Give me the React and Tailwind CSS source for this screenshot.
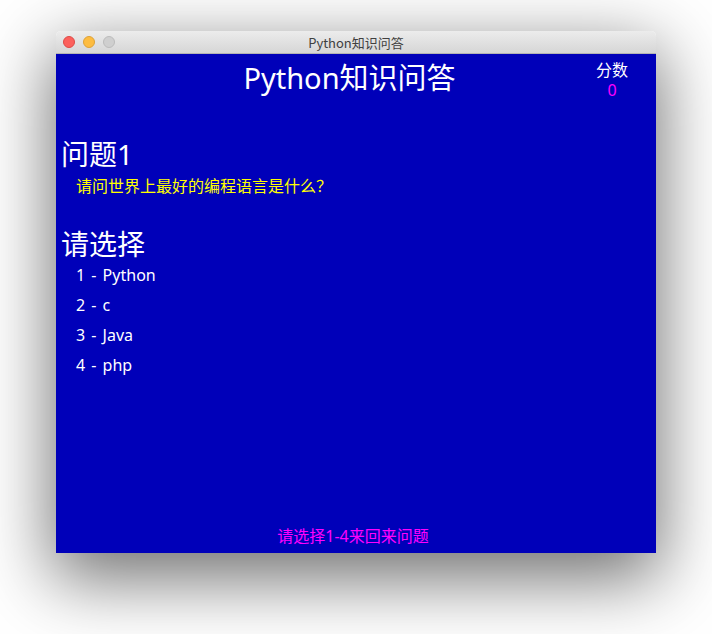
import React from "react";

const options = ["1 - Python", "2 - c", "3 - Java", "4 - php"];

const TrafficLight = ({ color, border }) => (
  <span
    className={`block w-[12px] h-[12px] rounded-full border ${color} ${border}`}
  />
);

const App = () => {
  return (
    <div className="w-[712px] h-[634px] bg-white pt-[31px] pl-[56px] font-['Noto_Sans','Noto_Sans_CJK_SC',sans-serif]">
      {/* window */}
      <div className="w-[600px] rounded-t-[5px] shadow-[0_22px_70px_4px_rgba(0,0,0,0.56)]">
        {/* title bar */}
        <div className="h-[23px] rounded-t-[5px] bg-gradient-to-b from-[#ececec] to-[#d6d6d6] border-b border-[#b4b4b4] grid items-center">
          <div className="[grid-area:1/1] flex items-center gap-[8px] pl-[7px]">
            <TrafficLight color="bg-[#fc605c]" border="border-[#de4a46]" />
            <TrafficLight color="bg-[#fdbc40]" border="border-[#dea236]" />
            <TrafficLight color="bg-[#cfcfcf]" border="border-[#bcbcbc]" />
          </div>
          <div className="[grid-area:1/1] text-center text-[13px] leading-none text-[#404040] font-['Noto_Sans_CJK_SC',sans-serif]">
            Python知识问答
          </div>
        </div>

        {/* content */}
        <div className="h-[499px] bg-[#0000b9] flex flex-col text-white">
          {/* header */}
          <div className="grid">
            <div className="[grid-area:1/1] pt-[9px] pr-[13px] text-center text-[29px] leading-none">
              Python知识问答
            </div>
            <div className="[grid-area:1/1] justify-self-end mr-[28px] mt-[6px] text-center text-[16px] leading-[20px]">
              <div>分数</div>
              <div className="text-[#ff00ff]">0</div>
            </div>
          </div>

          {/* question */}
          <div className="mt-[40px] pl-[5px] text-[28px] leading-none">问题1</div>
          <div className="mt-[10px] pl-[20px] text-[16px] leading-none text-[#ffff00]">
            请问世界上最好的编程语言是什么？
          </div>

          {/* choices */}
          <div className="mt-[36px] pl-[5px] text-[28px] leading-none">请选择</div>
          <div className="mt-[2px] pl-[20px] flex flex-col text-[16px] leading-[30px] [word-spacing:2px]">
            {options.map((opt) => (
              <div key={opt}>{opt}</div>
            ))}
          </div>

          {/* hint */}
          <div className="mt-auto pb-[9px] pr-[6px] text-center text-[16px] leading-none text-[#ff00ff]">
            请选择1-4来回来问题
          </div>
        </div>
      </div>
    </div>
  );
};

export default App;
